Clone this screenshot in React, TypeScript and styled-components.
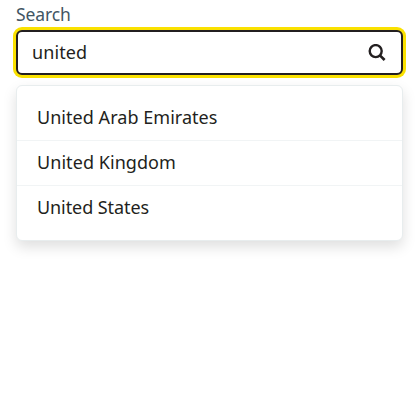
import React, { useState } from 'react';
import styled, { createGlobalStyle } from 'styled-components';

const GlobalStyle = createGlobalStyle`
  *, *::before, *::after { box-sizing: border-box; }
  body {
    margin: 0;
    background: #fff;
    color: #212b32;
    font-family: "Noto Sans", "Open Sans", sans-serif;
  }
`;

const Page = styled.main`
  min-height: 100vh;
  padding: 0 15px 0 16px;
`;

const Search = styled.div`
  display: flex;
  flex-direction: column;
`;

const Label = styled.label`
  height: 30px;
  color: #425563;
  font-size: 17.5px;
  line-height: 29px;
  letter-spacing: -0.1px;
`;

const Field = styled.div`
  display: flex;
  align-items: center;
  height: 45px;
  padding: 0 15px 0 14px;
  border: 2px solid #231f20;
  border-radius: 6px;
  background: #fff;
  box-shadow: 0 0 0 3px #fae100;
`;

const Input = styled.input`
  flex: 1;
  min-width: 0;
  height: 100%;
  padding: 0 0 2px;
  border: 0;
  outline: 0;
  background: transparent;
  color: #231f20;
  font: inherit;
  font-size: 18px;
  letter-spacing: 0.08px;
`;

const Icon = styled.svg`
  flex: none;
  width: 18px;
  height: 18px;
`;

const Results = styled.ul`
  height: 156px;
  margin: 10px 0 0;
  padding: 10px 0 9px;
  list-style: none;
  border: 1px solid #e8edee;
  border-radius: 6px;
  background: #fff;
  box-shadow: 0 6px 14px rgba(0, 0, 0, 0.13);
`;

const Result = styled.li<{ $spacing: number }>`
  height: 45px;
  padding: 0 20px;
  border-bottom: 1px solid #f1f4f5;
  color: #231f20;
  font-size: 18px;
  line-height: 42px;
  letter-spacing: ${({ $spacing }) => $spacing}px;

  &:last-child { border-bottom: 0; }
`;

const countries = [
  { name: 'United Arab Emirates', spacing: 0.04 },
  { name: 'United Kingdom', spacing: 0.06 },
  { name: 'United States', spacing: -0.08 },
];

export default function App() {
  const [query, setQuery] = useState('united');
  return (
    <Page>
      <GlobalStyle />
      <Search>
        <Label htmlFor="search">Search</Label>
        <Field>
          <Input id="search" value={query} onChange={(e) => setQuery(e.target.value)} />
          <Icon viewBox="0 0 18 18" fill="none" stroke="#231f20" aria-hidden="true">
            <circle cx="7.7" cy="7.1" r="6" strokeWidth="2.4" />
            <path d="M11.9 11.4L16.6 16" strokeWidth="2.7" />
          </Icon>
        </Field>
        <Results>
          {countries.map(({ name, spacing }) => (
            <Result key={name} $spacing={spacing}>{name}</Result>
          ))}
        </Results>
      </Search>
    </Page>
  );
}
